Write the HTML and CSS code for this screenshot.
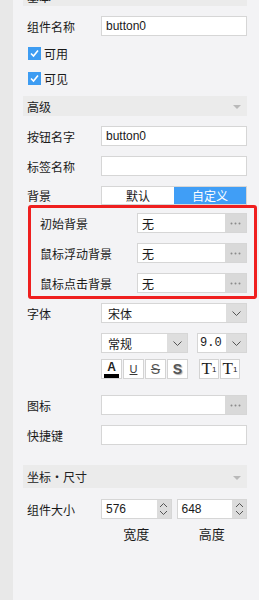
FILE: index.html
```html
<!DOCTYPE html>
<html lang="zh">
<head>
    <meta charset="UTF-8">
    <title>属性面板</title>
    <link rel="stylesheet" href="styles.css">
</head>
<body>
<div class="app">
    <div class="rail"></div>
    <div class="panel">
        <div class="section-head cut"><span>基本</span><i class="caret"></i></div>

        <div class="row">
            <span class="lbl">组件名称</span>
            <div class="input"><span class="latin">button0</span></div>
        </div>
        <div class="check first">
            <span class="box"><svg width="13" height="13" viewBox="0 0 13 13"><polyline points="3,6.5 5.5,9 10,3.5" fill="none" stroke="#fff" stroke-width="1.6"/></svg></span>
            <span>可用</span>
        </div>
        <div class="check">
            <span class="box"><svg width="13" height="13" viewBox="0 0 13 13"><polyline points="3,6.5 5.5,9 10,3.5" fill="none" stroke="#fff" stroke-width="1.6"/></svg></span>
            <span>可见</span>
        </div>

        <div class="section-head spaced"><span>高级</span><i class="caret"></i></div>

        <div class="row">
            <span class="lbl">按钮名字</span>
            <div class="input"><span class="latin">button0</span></div>
        </div>
        <div class="row">
            <span class="lbl">标签名称</span>
            <div class="input"></div>
        </div>
        <div class="row seg-row">
            <span class="lbl">背景</span>
            <div class="seg">
                <span class="seg-item">默认</span>
                <span class="seg-item active">自定义</span>
            </div>
        </div>

        <div class="highlight">
            <div class="row">
                <span class="lbl">初始背景</span>
                <div class="input browse"><span>无</span><span class="dots"><svg width="11" height="3" viewBox="0 0 11 3"><circle cx="1.5" cy="1.5" r="1" fill="#8a8a8a"/><circle cx="5.5" cy="1.5" r="1" fill="#8a8a8a"/><circle cx="9.5" cy="1.5" r="1" fill="#8a8a8a"/></svg></span></div>
            </div>
            <div class="row">
                <span class="lbl">鼠标浮动背景</span>
                <div class="input browse"><span>无</span><span class="dots"><svg width="11" height="3" viewBox="0 0 11 3"><circle cx="1.5" cy="1.5" r="1" fill="#8a8a8a"/><circle cx="5.5" cy="1.5" r="1" fill="#8a8a8a"/><circle cx="9.5" cy="1.5" r="1" fill="#8a8a8a"/></svg></span></div>
            </div>
            <div class="row">
                <span class="lbl">鼠标点击背景</span>
                <div class="input browse"><span>无</span><span class="dots"><svg width="11" height="3" viewBox="0 0 11 3"><circle cx="1.5" cy="1.5" r="1" fill="#8a8a8a"/><circle cx="5.5" cy="1.5" r="1" fill="#8a8a8a"/><circle cx="9.5" cy="1.5" r="1" fill="#8a8a8a"/></svg></span></div>
            </div>
        </div>

        <div class="row font-row">
            <span class="lbl">字体</span>
            <div class="select"><span class="sel-text">宋体</span><span class="arrow"><svg width="9" height="5" viewBox="0 0 9 5"><polyline points="0.5,0.5 4.5,4.5 8.5,0.5" fill="none" stroke="#555" stroke-width="1"/></svg></span></div>
        </div>
        <div class="sub-row">
            <div class="select style-sel"><span class="sel-text">常规</span><span class="arrow"><svg width="9" height="5" viewBox="0 0 9 5"><polyline points="0.5,0.5 4.5,4.5 8.5,0.5" fill="none" stroke="#555" stroke-width="1"/></svg></span></div>
            <div class="select size-sel"><span class="sel-text mono">9.0</span><span class="arrow"><svg width="9" height="5" viewBox="0 0 9 5"><polyline points="0.5,0.5 4.5,4.5 8.5,0.5" fill="none" stroke="#555" stroke-width="1"/></svg></span></div>
        </div>
        <div class="tool-row">
            <div class="tool-group">
                <span class="tool color-a"><b>A</b><i class="bar"></i></span>
                <span class="tool under">U</span>
                <span class="tool strike">S</span>
                <span class="tool shadow">S</span>
            </div>
            <div class="tool-group">
                <span class="tool serif">T<sup>1</sup></span>
                <span class="tool serif">T<sub>1</sub></span>
            </div>
        </div>

        <div class="row icon-row">
            <span class="lbl">图标</span>
            <div class="input browse"><span></span><span class="dots"><svg width="11" height="3" viewBox="0 0 11 3"><circle cx="1.5" cy="1.5" r="1" fill="#8a8a8a"/><circle cx="5.5" cy="1.5" r="1" fill="#8a8a8a"/><circle cx="9.5" cy="1.5" r="1" fill="#8a8a8a"/></svg></span></div>
        </div>
        <div class="row">
            <span class="lbl">快捷键</span>
            <div class="input"></div>
        </div>

        <div class="section-head tall"><span>坐标・尺寸</span><i class="caret"></i></div>

        <div class="row size-row">
            <span class="lbl">组件大小</span>
            <div class="spins">
                <div class="spin"><span class="latin">576</span><span class="spin-btn"><svg width="9" height="16" viewBox="0 0 9 16"><polyline points="1,6 4.5,2.5 8,6" fill="none" stroke="#555"/><polyline points="1,10 4.5,13.5 8,10" fill="none" stroke="#555"/></svg></span></div>
                <div class="spin"><span class="latin">648</span><span class="spin-btn"><svg width="9" height="16" viewBox="0 0 9 16"><polyline points="1,6 4.5,2.5 8,6" fill="none" stroke="#555"/><polyline points="1,10 4.5,13.5 8,10" fill="none" stroke="#555"/></svg></span></div>
            </div>
        </div>
        <div class="spin-labels">
            <span>宽度</span>
            <span>高度</span>
        </div>
    </div>
</div>
</body>
</html>
```

FILE: styles.css
```css
body {
    margin: 0;
    background: #f3f3f5;
    font-family: "Noto Sans CJK SC", sans-serif;
    font-size: 12px;
    color: #1a1a1a;
}
.app {
    display: flex;
    min-height: 600px;
    overflow: hidden;
}
.rail {
    flex: none;
    width: 13px;
    background: #e8e8e8;
}
.panel {
    flex: 1;
    padding: 0 12px 0 10px;
}

/* section headers */
.section-head {
    display: flex;
    align-items: center;
    justify-content: space-between;
    height: 20px;
    padding: 0 6px 0 4px;
    background: #ebebeb;
    color: #222;
}
.section-head.cut {
    margin-top: -14px;
}
.section-head.spaced {
    margin-top: 11px;
}
.section-head.tall {
    height: 23px;
    margin-top: 20px;
}
.caret {
    width: 0;
    height: 0;
    border-left: 4px solid transparent;
    border-right: 4px solid transparent;
    border-top: 4px solid #b9b9b9;
    margin-top: 2px;
}

/* form rows */
.row {
    display: grid;
    grid-template-columns: 78px 1fr;
    align-items: center;
    height: 20px;
    margin-top: 10px;
}
.row .lbl {
    padding-left: 4px;
    white-space: nowrap;
}
.latin {
    font-family: "Liberation Sans", sans-serif;
    font-size: 12px;
}
.input {
    display: flex;
    align-items: center;
    box-sizing: border-box;
    height: 20px;
    padding-left: 4px;
    border: 1px solid #d6d6d6;
    background: #fff;
}
.input.browse {
    padding-right: 0;
}
.dots {
    display: flex;
    align-items: center;
    justify-content: center;
    width: 21px;
    height: 100%;
    margin-left: auto;
    background: #d9d9d9;
}

/* checkboxes */
.check {
    display: flex;
    align-items: center;
    gap: 3px;
    height: 13px;
    margin-top: 12px;
    padding-left: 5px;
}
.check.first {
    margin-top: 11px;
}
.check .box {
    display: flex;
    width: 13px;
    height: 13px;
    background: #3d9cf2;
}

/* segmented switch */
.seg-row {
    height: 19px;
}
.seg {
    display: flex;
    box-sizing: border-box;
    height: 19px;
    border: 1px solid #d6d6d6;
}
.seg-item {
    flex: 1;
    display: flex;
    align-items: center;
    justify-content: center;
    background: #fff;
}
.seg-item.active {
    background: #409ef6;
    color: #fff;
}

/* red highlight box */
.highlight {
    display: flex;
    flex-direction: column;
    gap: 10px;
    margin: 0 -10px 0 5px;
    padding: 5px 7px 3px 9px;
    border: 3px solid #ef1f1f;
    border-radius: 3px;
}
.highlight .row {
    grid-template-columns: 1fr 110px;
    margin-top: 0;
}
.highlight .row .lbl {
    padding-left: 0;
}

/* selects */
.font-row {
    margin-top: 4px;
}
.select {
    display: flex;
    align-items: center;
    box-sizing: border-box;
    height: 20px;
    border: 1px solid #d6d6d6;
    background: #fff;
}
.sel-text {
    flex: 1;
    padding-left: 6px;
}
.mono {
    font-family: "Liberation Mono", monospace;
    padding-left: 2px;
}
.arrow {
    display: flex;
    align-items: center;
    justify-content: center;
    width: 20px;
    height: 100%;
    background: #dedede;
}
.sub-row {
    display: flex;
    gap: 9px;
    margin: 10px 0 0 78px;
}
.style-sel {
    width: 87px;
}
.size-sel {
    flex: 1;
}

/* text style buttons */
.tool-row {
    display: flex;
    gap: 11px;
    margin: 6px 0 0 78px;
}
.tool-group {
    display: flex;
    gap: 1px;
}
.tool {
    position: relative;
    display: flex;
    align-items: center;
    justify-content: center;
    box-sizing: border-box;
    width: 21px;
    height: 20px;
    border: 1px solid #d3d3d3;
    background: #fff;
    font-family: "Liberation Sans", sans-serif;
    color: #3a3a3a;
}
.tool-group + .tool-group .tool {
    width: 20px;
}
.color-a {
    flex-direction: column;
    justify-content: flex-start;
}
.color-a b {
    font-size: 12px;
    line-height: 12px;
    margin-top: 1px;
    color: #222;
}
.color-a .bar {
    width: 15px;
    height: 4px;
    margin-top: 1px;
    background: #000;
}
.under {
    font-size: 11px;
    text-decoration: underline;
}
.strike {
    font-size: 14px;
    text-decoration: line-through;
    color: #555;
}
.shadow {
    font-size: 14px;
    font-weight: bold;
    color: #555;
    text-shadow: 1px 1px 1px #aaa;
}
.serif {
    font-family: "Liberation Serif", serif;
    font-size: 17px;
    color: #222;
}
.serif sup,
.serif sub {
    font-size: 8px;
    font-family: "Liberation Sans", sans-serif;
}
.serif sup {
    vertical-align: 7px;
}
.serif sub {
    vertical-align: -3px;
}

.icon-row {
    margin-top: 16px;
}

/* spin boxes */
.size-row {
    margin-top: 11px;
}
.spins {
    display: flex;
    gap: 5px;
}
.spin {
    flex: 1;
    display: flex;
    align-items: center;
    box-sizing: border-box;
    height: 20px;
    padding-left: 4px;
    border: 1px solid #d6d6d6;
    background: #fff;
}
.spin-btn {
    display: flex;
    align-items: center;
    justify-content: center;
    width: 14px;
    height: 100%;
    margin-left: auto;
    background: #dcdcdc;
}
.spin-labels {
    display: flex;
    gap: 5px;
    margin: 5px 0 0 78px;
    font-size: 13px;
}
.spin-labels span {
    flex: 1;
    text-align: center;
}
```
